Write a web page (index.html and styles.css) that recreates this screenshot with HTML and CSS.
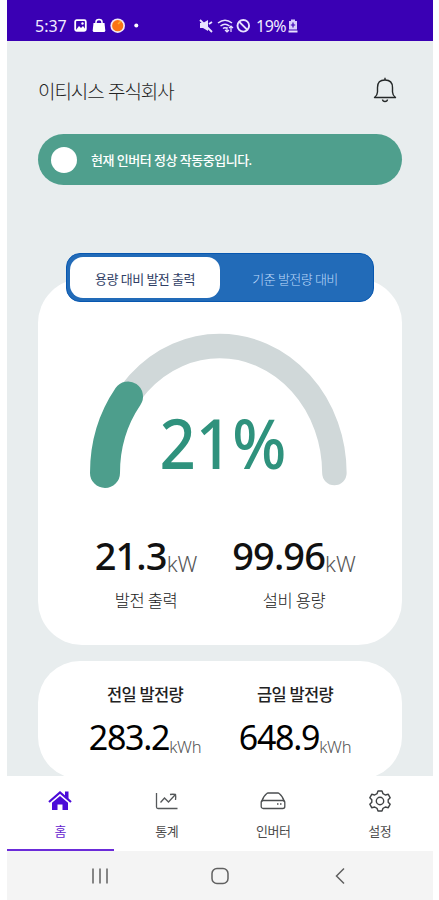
FILE: index.html
```html
<!DOCTYPE html>
<html lang="ko">
<head>
<meta charset="utf-8">
<title>발전 현황</title>
<link rel="stylesheet" href="styles.css">
</head>
<body>
<div class="phone">
  <div class="status">
    <span class="clock">5:37</span>
    <svg class="notices" width="68" height="16" viewBox="0 0 68 16">
      <rect x="1.2" y="2.2" width="10.6" height="10.6" rx="1.5" fill="none" stroke="#fff" stroke-width="1.8"/>
      <path d="M2 12l3-4 2 2 2-2 3 4z" fill="#fff"/><circle cx="8.5" cy="5.5" r="1.2" fill="#fff"/>
      <path d="M19.500 5h11l.8 7.500q0 1.500-1.500 1.500h-9.600q-1.500 0-1.500-1.500z" fill="#fff"/>
      <path d="M22 6V4q0-2.500 3-2.500T28 4v2" fill="none" stroke="#fff" stroke-width="1.500"/>
      <circle cx="43.700" cy="7.700" r="7.300" fill="#f4e9f3"/><circle cx="43.700" cy="7.700" r="5.600" fill="#fb7414"/>
      <path d="M44 6l3-3" stroke="#ffb02e" stroke-width="1.500"/>
      <circle cx="62.300" cy="7.500" r="2" fill="#fff"/>
    </svg>
    <svg class="signals" width="52" height="16" viewBox="0 0 52 16" fill="none" stroke="#e9e2ff" stroke-width="1.500">
      <path d="M1 5h3l5-3v11L4 10H1z" fill="#e9e2ff" stroke="none"/><path d="M1 2l12 12M10 6l3-2" stroke-width="1.800"/>
      <path d="M19 5q7-5.500 14 0M21.500 8q4.500-3.500 9 0M24 10.500q2-1.500 4 0"/><path d="M28 9v5m-2-2l2 2 2-2M32 14V8m-2 2l2-2 2 2" stroke-width="1.200"/>
      <circle cx="44.300" cy="7.800" r="5.800" stroke-width="1.900"/><path d="M40.300 3.800l8 8" stroke-width="1.900"/>
    </svg>
    <span class="percent">19%</span>
    <svg width="10" height="14" viewBox="0 0 10 14"><path d="M3 .5h4V2h2v8.500H1V2h2z" fill="#d9cdfb"/><path d="M5 3.500v5M2.800 6h4.400" stroke="#3b00b3" stroke-width="1.200"/><path d="M.5 12.500h9" stroke="#e9e2ff" stroke-width="2"/></svg>
  </div>

  <main class="content">
    <header class="header">
      <h1 class="company">이티시스 주식회사</h1>
      <svg class="bell" width="24" height="27" viewBox="0 0 24 27" fill="none" stroke="#242828" stroke-width="1.400" stroke-linejoin="round">
        <path d="M4.500 15V10.500q0-7.500 7.500-7.500t7.500 7.500V15q0 3 3 5.500h-21q3-2.500 3-5.500z"/><path d="M12 .800V3"/><path d="M9.500 22.500q.3 2 2.500 2t2.500-2"/>
      </svg>
    </header>
    <div class="banner"><span class="lamp"></span><span class="message">현재 인버터 정상 작동중입니다.</span></div>

    <section class="card output">
      <div class="tabs"><div class="tab active"><span>용량 대비 발전 출력</span></div><div class="tab"><span>기준 발전량 대비</span></div></div>
      <div class="gauge">
        <svg width="300" height="180" viewBox="0 0 300 180" fill="none" stroke-linecap="round">
          <path d="M35 153A114.700 127 0 0 1 264.400 153" stroke="#d0d8d9" stroke-width="24.500"/>
          <path d="M35 153A114.700 127 0 0 1 58 76.500" stroke="#4d9e8c" stroke-width="30"/>
        </svg>
        <span class="rate">21%</span>
      </div>
      <div class="stats">
        <div class="stat"><div class="value">21.3<small>kW</small></div><div class="label">발전 출력</div></div>
        <div class="stat"><div class="value">99.96<small>kW</small></div><div class="label">설비 용량</div></div>
      </div>
    </section>

    <section class="card daily">
      <div class="stat"><div class="label">전일 발전량</div><div class="value">283.2<small>kWh</small></div></div>
      <div class="stat"><div class="label">금일 발전량</div><div class="value">648.9<small>kWh</small></div></div>
    </section>
  </main>

  <nav class="nav">
    <a class="item active">
      <svg width="26" height="22" viewBox="0 0 26 22"><path d="M2 12L13 2.500 24 12" fill="none" stroke="#4b0bd8" stroke-width="2.200"/><path d="M18 1.500h3.500V9L18 6z" fill="#4b0bd8"/><path d="M5 12.800l8-6.700 8 6.700V20h-5.500v-5.500h-5V20H5z" fill="#4b0bd8"/></svg>
      <span>홈</span>
    </a>
    <a class="item">
      <svg width="26" height="22" viewBox="0 0 26 22" fill="none" stroke="#55585a" stroke-width="1.300"><path d="M2.500 3v14q0 1.500 1.500 1.500h19.500"/><path d="M6.500 12.500l4-4.500 4 4 6.500-7"/><path d="M16 4.500q3-.5 5.500 0 .5 2.500 0 5.500"/></svg>
      <span>통계</span>
    </a>
    <a class="item">
      <svg width="26" height="22" viewBox="0 0 26 22" fill="none" stroke="#4b4e50" stroke-width="1.300"><rect x="1.200" y="10.500" width="23.600" height="8" rx="2"/><path d="M1.800 11.500q1.200-5 5-8 .6-.5 1.200-.5h10q.6 0 1.200.5 3.800 3 5 8"/><path d="M17 14h1.500M20 14h1.500"/></svg>
      <span>인버터</span>
    </a>
    <a class="item">
      <svg width="26" height="22" viewBox="0 0 26 22" fill="none" stroke="#3f4244" stroke-width="1.400" stroke-linejoin="round"><path d="M11 1h4l1 2.700 2.300 1.300 3-.7 1.900 3.500-2 2v2.400l2 2-1.900 3.500-3-.7L16 18.300 15 21h-4l-1-2.700L7.700 17l-3 .7-1.900-3.500 2-2V9.800l-2-2 1.900-3.500 3 .7L10 3.700z"/><circle cx="13" cy="11" r="3.700"/></svg>
      <span>설정</span>
    </a>
  </nav>
  <div class="system">
    <svg width="20" height="20" viewBox="0 0 20 20" stroke="#606060" stroke-width="1.500"><path d="M3 2.500v15M10 2.500v15M17 2.500v15"/></svg>
    <svg width="20" height="20" viewBox="0 0 20 20" fill="none" stroke="#606060" stroke-width="1.500"><rect x="2" y="2.500" width="16" height="15" rx="5"/></svg>
    <svg width="20" height="20" viewBox="0 0 20 20" fill="none" stroke="#606060" stroke-width="1.500"><path d="M14 2.500L6.500 10l7.500 7.500"/></svg>
  </div>
</div>
</body>
</html>
```
FILE: styles.css
```css
* { box-sizing: border-box; }
body { margin: 0; background: #fff; font-family: "Noto Sans", "Noto Sans CJK KR", sans-serif; color: #111; }
svg { display: block; flex: none; }
.phone { width: 426px; height: 900px; margin-left: 7px; display: flex; flex-direction: column; overflow: hidden; }
.status { flex: none; height: 41px; padding: 10px 0 0 28px; display: flex; align-items: center; background: #3a00b4; color: #f1ecff; }
.clock { width: 39px; font-size: 16px; line-height: 20px; }
.signals { margin-left: 57px; }
.percent { margin-left: 5px; width: 32px; font-size: 16px; line-height: 20px; letter-spacing: -0.500px; }
.content { flex: none; height: 735px; padding: 0 31px; background: #e8edee; overflow: hidden; }
.header { height: 93px; padding: 6px 5px 0 0; display: flex; align-items: center; justify-content: space-between; }
.company { margin: 0; font-family: "Noto Sans CJK KR", sans-serif; font-size: 19px; line-height: 28px; font-weight: 300; letter-spacing: -1.050px; color: #222; }
.banner { height: 51px; border-radius: 26px; background: #4f9f8d; display: flex; align-items: center; padding-left: 13px; color: #fff; }
.lamp { width: 26px; height: 26px; border-radius: 50%; background: #fff; margin-right: 14px; }
.message { font-size: 13px; line-height: 20px; font-weight: 500; letter-spacing: -0.500px; padding-top: 1px; }
.card { background: #fff; border-radius: 44px; }
.output { margin-top: 94px; height: 366px; }
.tabs { position: relative; top: -26px; width: 308px; height: 49px; margin: 0 auto; padding: 3px; display: flex; border-radius: 14px; background: #226bb8; border: 1px solid #0757b0; left: 0; }
.tab { flex: 1; display: flex; align-items: center; justify-content: center; padding-top: 2px; font-size: 13px; line-height: 20px; letter-spacing: -0.550px; color: #bcd9fa; font-weight: 300; }
.tab.active { background: #fff; color: #303e65; border-radius: 13px; font-weight: 400; }
.gauge { display: grid; width: 300px; height: 180px; margin: -8px auto 0; }
.gauge svg, .rate { grid-area: 1 / 1; }
.rate { align-self: start; justify-self: center; margin: 75px 0 0 6px; font-size: 69px; line-height: 94px; font-weight: 500; color: #2f927d; transform: scaleX(0.92); }
.stats { display: flex; padding: 28px 34px 0; }
.stat { text-align: center; white-space: nowrap; width: 148px; }
.value { font-size: 38px; line-height: 54px; font-weight: 500; letter-spacing: -0.900px; }
.value small { position: relative; top: 2px; font-size: 22px; font-weight: 300; letter-spacing: 0; color: #555; }
.label { font-size: 16.500px; line-height: 26px; font-weight: 300; letter-spacing: -0.550px; color: #222; }
.daily { display: flex; margin-top: 16px; padding: 19px 32px 0; height: 118px; border-radius: 42px; }
.daily .stat { width: 150px; }
.daily .label { font-weight: 500; font-size: 16.500px; line-height: 30px; letter-spacing: -0.700px; }
.daily .value { font-size: 34px; line-height: 54px; font-weight: 400; letter-spacing: -1.300px; color: #000; }
.daily .value small { top: 3px; font-size: 16.500px; letter-spacing: -0.300px; }
.nav { flex: none; height: 75px; display: grid; grid-template-columns: repeat(4, 1fr); background: #fff; }
.item { display: flex; flex-direction: column; align-items: center; padding-top: 14px; font-size: 13px; line-height: 20px; gap: 9px; color: #4c4c4c; border-bottom: 2px solid transparent; letter-spacing: -0.400px; }
.item.active { color: #6421cf; border-color: #6b2bd9; }
.system { height: 49px; display: flex; gap: 100px; align-items: center; justify-content: center; background: #f4f4f4; }
```
